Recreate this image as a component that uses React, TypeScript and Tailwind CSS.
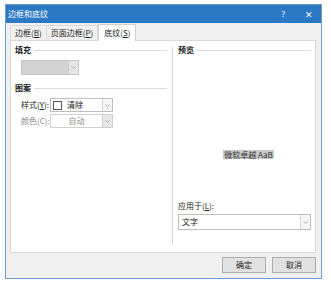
import { ChevronDown } from 'lucide-react';

const FONT = "font-['Microsoft_YaHei','Noto_Sans_CJK_SC',sans-serif]";

// 下拉框右侧按钮
function DropButton({ disabled = false }: { disabled?: boolean }) {
  return (
    <div
      className={`w-[10px] h-full flex items-center justify-center border-l ${
        disabled ? 'border-[#cfcfcf] bg-[#e6e6e6]' : 'border-[#d4d4d4] bg-[#f5f5f5]'
      }`}
    >
      <ChevronDown className="w-[7px] h-[7px] text-[#7a7a7a]" strokeWidth={2} />
    </div>
  );
}

function SectionTitle({ label, width }: { label: string; width: string }) {
  return (
    <div className={`flex items-center gap-[3px] ${width}`}>
      <span className="text-[8px] leading-none font-semibold text-[#222]">{label}</span>
      <div className="flex-1 h-px bg-[#dcdcdc]" />
    </div>
  );
}

export default function App() {
  return (
    <div className={`w-[331px] h-[284px] bg-white pt-[4px] pl-[5px] ${FONT}`}>
      <div className="w-[317px] h-[275px] border border-[#6f9bcb] bg-[#f0f0f0] flex flex-col">
        {/* 标题栏 */}
        <div className="h-[18px] bg-[#2b79c4] flex items-center pl-[2px] pr-[8px] text-white text-[8px] leading-none">
          <span>边框和底纹</span>
          <div className="flex-1" />
          <span className="mr-[20px] text-[8px]">?</span>
          <span className="text-[9px]">✕</span>
        </div>

        {/* 选项卡 */}
        <div className="h-[17px] flex items-end pl-[4px] text-[8px] leading-none text-[#222] whitespace-nowrap">
          <div className="h-[15px] px-[4px] flex items-center border border-b-0 border-[#dadada] bg-[#f0f0f0]">
            边框(<span className="underline">B</span>)
          </div>
          <div className="h-[15px] px-[4px] flex items-center border border-l-0 border-b-0 border-[#dadada] bg-[#f0f0f0]">
            页面边框(<span className="underline">P</span>)
          </div>
          <div className="h-[17px] px-[5px] flex items-center border border-b-0 border-[#d0d0d0] bg-white -mb-px relative z-10">
            底纹(<span className="underline">S</span>)
          </div>
        </div>

        {/* 内容面板 */}
        <div className="ml-[4px] mr-[5px] h-[213px] bg-white border border-[#d9d9d9] flex text-[8px] leading-none text-[#222] whitespace-nowrap">
          {/* 左侧 */}
          <div className="w-[161px] pl-[4px] pt-[5px] flex flex-col">
            <SectionTitle label="填充" width="w-[152px]" />
            <div className="ml-[6px] mt-[6px] w-[58px] h-[15px] flex border border-[#c6c6c6]">
              <div className="flex-1 bg-[#d3d3d3]" />
              <DropButton disabled />
            </div>
            <div className="mt-[9px]">
              <SectionTitle label="图案" width="w-[152px]" />
            </div>
            <div className="mt-[6px] ml-[6px] flex items-center">
              <span className="w-[29px]">
                样式(<span className="underline">Y</span>):
              </span>
              <div className="w-[63px] h-[14px] flex items-center border border-[#bdbdbd]">
                <div className="ml-[2px] w-[9px] h-[9px] border border-[#555]" />
                <span className="ml-[5px] flex-1">清除</span>
                <DropButton />
              </div>
            </div>
            <div className="mt-[2px] ml-[6px] flex items-center text-[#8a8a8a]">
              <span className="w-[29px]">颜色(C):</span>
              <div className="w-[63px] h-[14px] flex items-center border border-[#d0d0d0]">
                <span className="flex-1 text-center">自动</span>
                <DropButton disabled />
              </div>
            </div>
          </div>

          {/* 分隔线 */}
          <div className="mt-[6px] mb-[7px] w-px bg-[#d6d6d6]" />

          {/* 右侧 */}
          <div className="flex-1 pl-[5px] pr-[4px] pt-[5px] flex flex-col">
            <SectionTitle label="预览" width="w-full" />
            <div className="flex-1 flex items-start justify-center pt-[96px] pl-[8px]">
              <span className="bg-[#c9c9c9] px-px text-[8px] leading-[9px] text-[#333]">
                微软卓越 AaB
              </span>
            </div>
            <span className="mb-[4px]">
              应用于(<span className="underline">L</span>):
            </span>
            <div className="h-[16px] mb-[22px] flex items-center border border-[#bdbdbd]">
              <span className="ml-[3px] flex-1">文字</span>
              <DropButton />
            </div>
          </div>
        </div>

        {/* 底部按钮 */}
        <div className="flex-1 flex items-center justify-end gap-[6px] pr-[5px] pb-[1px] text-[8px] leading-none text-[#222]">
          <button className="w-[44px] h-[16px] bg-[#e1e1e1] border border-[#adadad]">确定</button>
          <button className="w-[44px] h-[16px] bg-[#e1e1e1] border border-[#adadad]">取消</button>
        </div>
      </div>
    </div>
  );
}
